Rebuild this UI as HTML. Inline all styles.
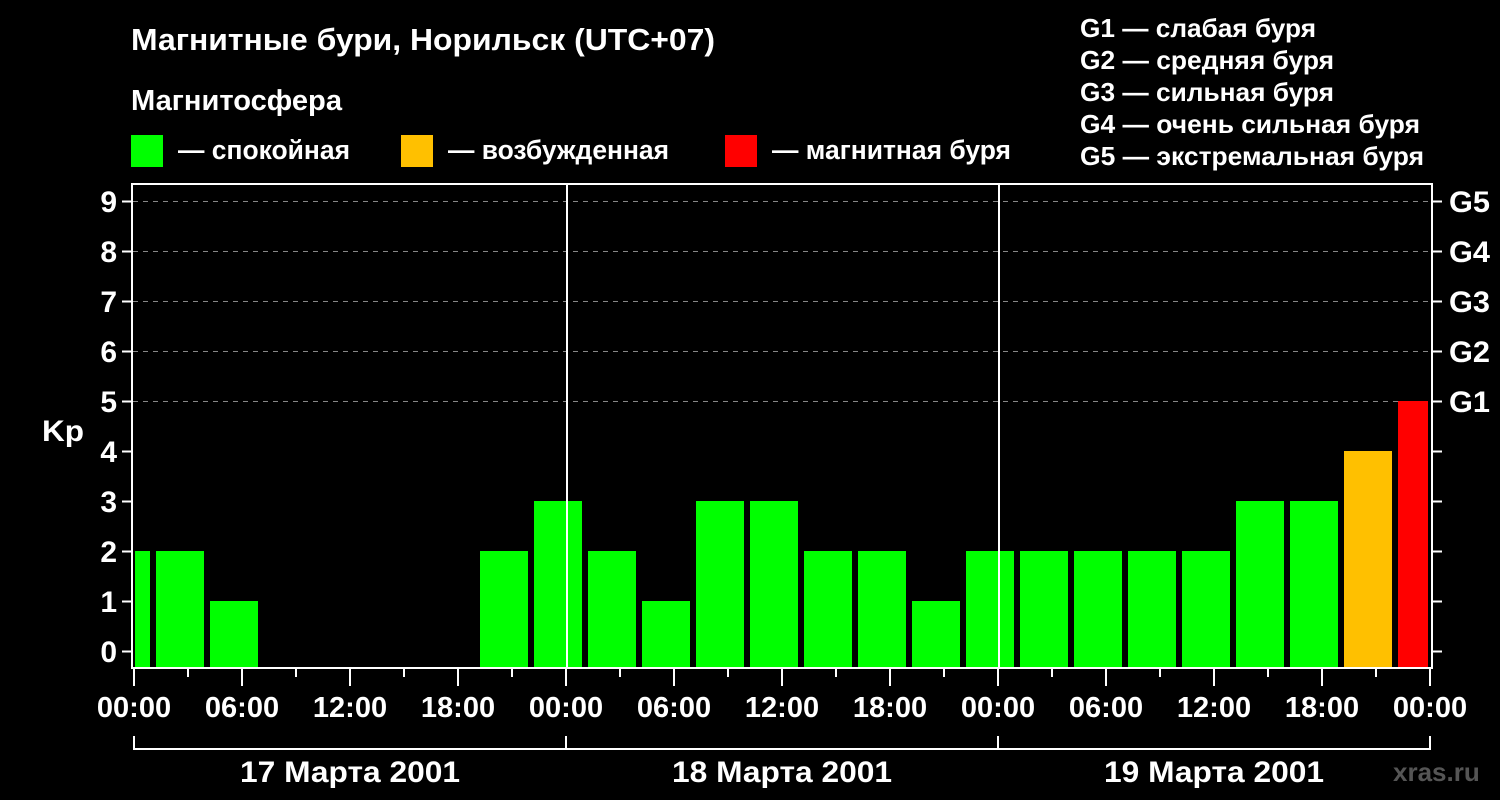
<!DOCTYPE html>
<html><head><meta charset="utf-8"><style>
html,body{margin:0;padding:0;background:#000;}
svg{display:block;}
text{font-family:"Liberation Sans",sans-serif;font-weight:bold;fill:#fff;}
</style></head><body>
<svg width="1500" height="800" xmlns="http://www.w3.org/2000/svg">
<rect width="1500" height="800" fill="#000"/>
<text x="131" y="50" font-size="31" textLength="584" lengthAdjust="spacingAndGlyphs">Магнитные бури, Норильск (UTC+07)</text>
<text x="131" y="110" font-size="29" textLength="211" lengthAdjust="spacingAndGlyphs">Магнитосфера</text>
<rect x="131" y="135" width="32" height="32" fill="#00ff00"/>
<text x="178" y="159" font-size="27" textLength="172" lengthAdjust="spacingAndGlyphs">— спокойная</text>
<rect x="401" y="135" width="32" height="32" fill="#ffc000"/>
<text x="448" y="159" font-size="27" textLength="221" lengthAdjust="spacingAndGlyphs">— возбужденная</text>
<rect x="725" y="135" width="32" height="32" fill="#ff0000"/>
<text x="772" y="159" font-size="27" textLength="239" lengthAdjust="spacingAndGlyphs">— магнитная буря</text>
<g font-size="26">
<text x="1080" y="37" textLength="236" lengthAdjust="spacingAndGlyphs">G1 — слабая буря</text>
<text x="1080" y="69" textLength="254" lengthAdjust="spacingAndGlyphs">G2 — средняя буря</text>
<text x="1080" y="101" textLength="254" lengthAdjust="spacingAndGlyphs">G3 — сильная буря</text>
<text x="1080" y="133" textLength="340" lengthAdjust="spacingAndGlyphs">G4 — очень сильная буря</text>
<text x="1080" y="165" textLength="344" lengthAdjust="spacingAndGlyphs">G5 — экстремальная буря</text>
</g>
<g stroke="#888" stroke-width="1" stroke-dasharray="5,5">
<line x1="133" x2="1432" y1="201.5" y2="201.5"/>
<line x1="133" x2="1432" y1="251.5" y2="251.5"/>
<line x1="133" x2="1432" y1="301.5" y2="301.5"/>
<line x1="133" x2="1432" y1="351.5" y2="351.5"/>
<line x1="133" x2="1432" y1="401.5" y2="401.5"/>
</g>
<g fill="#00ff00">
<rect x="135" y="551" width="15" height="117"/>
<rect x="156" y="551" width="48" height="117"/>
<rect x="210" y="601" width="48" height="67"/>
<rect x="480" y="551" width="48" height="117"/>
<rect x="534" y="501" width="48" height="167"/>
<rect x="588" y="551" width="48" height="117"/>
<rect x="642" y="601" width="48" height="67"/>
<rect x="696" y="501" width="48" height="167"/>
<rect x="750" y="501" width="48" height="167"/>
<rect x="804" y="551" width="48" height="117"/>
<rect x="858" y="551" width="48" height="117"/>
<rect x="912" y="601" width="48" height="67"/>
<rect x="966" y="551" width="48" height="117"/>
<rect x="1020" y="551" width="48" height="117"/>
<rect x="1074" y="551" width="48" height="117"/>
<rect x="1128" y="551" width="48" height="117"/>
<rect x="1182" y="551" width="48" height="117"/>
<rect x="1236" y="501" width="48" height="167"/>
<rect x="1290" y="501" width="48" height="167"/>
</g>
<rect x="1344" y="451" width="48" height="217" fill="#ffc000"/>
<rect x="1398" y="401" width="30" height="267" fill="#ff0000"/>
<g stroke="#fff" stroke-width="2">
<line x1="567" x2="567" y1="183" y2="668"/>
<line x1="999" x2="999" y1="183" y2="668"/>
</g>
<rect x="132" y="184" width="1300" height="484" fill="none" stroke="#fff" stroke-width="2"/>
<g stroke="#fff" stroke-width="2">
<line x1="122" x2="132" y1="201.5" y2="201.5"/><line x1="122" x2="132" y1="251.5" y2="251.5"/>
<line x1="122" x2="132" y1="301.5" y2="301.5"/><line x1="122" x2="132" y1="351.5" y2="351.5"/>
<line x1="122" x2="132" y1="401.5" y2="401.5"/><line x1="122" x2="132" y1="451.5" y2="451.5"/>
<line x1="122" x2="132" y1="501.5" y2="501.5"/><line x1="122" x2="132" y1="551.5" y2="551.5"/>
<line x1="122" x2="132" y1="601.5" y2="601.5"/><line x1="122" x2="132" y1="651.5" y2="651.5"/>
<line x1="1432" x2="1442" y1="201.5" y2="201.5"/><line x1="1432" x2="1442" y1="251.5" y2="251.5"/>
<line x1="1432" x2="1442" y1="301.5" y2="301.5"/><line x1="1432" x2="1442" y1="351.5" y2="351.5"/>
<line x1="1432" x2="1442" y1="401.5" y2="401.5"/><line x1="1432" x2="1442" y1="451.5" y2="451.5"/>
<line x1="1432" x2="1442" y1="501.5" y2="501.5"/><line x1="1432" x2="1442" y1="551.5" y2="551.5"/>
<line x1="1432" x2="1442" y1="601.5" y2="601.5"/><line x1="1432" x2="1442" y1="651.5" y2="651.5"/>
</g>
<g font-size="30" text-anchor="end">
<text x="117" y="212">9</text><text x="117" y="262">8</text><text x="117" y="312">7</text>
<text x="117" y="362">6</text><text x="117" y="412">5</text><text x="117" y="462">4</text>
<text x="117" y="512">3</text><text x="117" y="562">2</text><text x="117" y="612">1</text>
<text x="117" y="662">0</text>
</g>
<text x="42" y="441" font-size="30" textLength="42" lengthAdjust="spacingAndGlyphs">Kp</text>
<g font-size="30">
<text x="1449" y="212" textLength="41" lengthAdjust="spacingAndGlyphs">G5</text><text x="1449" y="262" textLength="41" lengthAdjust="spacingAndGlyphs">G4</text><text x="1449" y="312" textLength="41" lengthAdjust="spacingAndGlyphs">G3</text>
<text x="1449" y="362" textLength="41" lengthAdjust="spacingAndGlyphs">G2</text><text x="1449" y="412" textLength="41" lengthAdjust="spacingAndGlyphs">G1</text>
</g>
<g stroke="#fff" stroke-width="2">
<line x1="134" x2="134" y1="668" y2="686"/><line x1="188" x2="188" y1="668" y2="677"/>
<line x1="242" x2="242" y1="668" y2="686"/><line x1="296" x2="296" y1="668" y2="677"/>
<line x1="350" x2="350" y1="668" y2="686"/><line x1="404" x2="404" y1="668" y2="677"/>
<line x1="458" x2="458" y1="668" y2="686"/><line x1="512" x2="512" y1="668" y2="677"/>
<line x1="566" x2="566" y1="668" y2="686"/><line x1="620" x2="620" y1="668" y2="677"/>
<line x1="674" x2="674" y1="668" y2="686"/><line x1="728" x2="728" y1="668" y2="677"/>
<line x1="782" x2="782" y1="668" y2="686"/><line x1="836" x2="836" y1="668" y2="677"/>
<line x1="890" x2="890" y1="668" y2="686"/><line x1="944" x2="944" y1="668" y2="677"/>
<line x1="998" x2="998" y1="668" y2="686"/><line x1="1052" x2="1052" y1="668" y2="677"/>
<line x1="1106" x2="1106" y1="668" y2="686"/><line x1="1160" x2="1160" y1="668" y2="677"/>
<line x1="1214" x2="1214" y1="668" y2="686"/><line x1="1268" x2="1268" y1="668" y2="677"/>
<line x1="1322" x2="1322" y1="668" y2="686"/><line x1="1376" x2="1376" y1="668" y2="677"/>
<line x1="1430" x2="1430" y1="668" y2="686"/>
<line x1="134" x2="1430" y1="749" y2="749"/>
<line x1="134" x2="134" y1="736" y2="750"/><line x1="566" x2="566" y1="736" y2="750"/>
<line x1="998" x2="998" y1="736" y2="750"/><line x1="1430" x2="1430" y1="736" y2="750"/>
</g>
<g font-size="29" text-anchor="middle">
<text x="134" y="717">00:00</text><text x="242" y="717">06:00</text><text x="350" y="717">12:00</text>
<text x="458" y="717">18:00</text><text x="566" y="717">00:00</text><text x="674" y="717">06:00</text>
<text x="782" y="717">12:00</text><text x="890" y="717">18:00</text><text x="998" y="717">00:00</text>
<text x="1106" y="717">06:00</text><text x="1214" y="717">12:00</text><text x="1322" y="717">18:00</text>
<text x="1430" y="717">00:00</text>
</g>
<g font-size="30">
<text x="240" y="782" textLength="220" lengthAdjust="spacingAndGlyphs">17 Марта 2001</text>
<text x="672" y="782" textLength="220" lengthAdjust="spacingAndGlyphs">18 Марта 2001</text>
<text x="1104" y="782" textLength="220" lengthAdjust="spacingAndGlyphs">19 Марта 2001</text>
</g>
<text x="1393" y="781" font-size="26" style="fill:#555">xras.ru</text>
</svg>
</body></html>
